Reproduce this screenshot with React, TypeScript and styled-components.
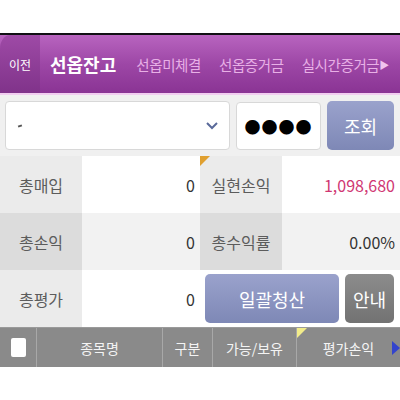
import React from "react";
import styled, { createGlobalStyle, css } from "styled-components";

const GlobalStyle = createGlobalStyle`
  html, body {
    margin: 0;
    padding: 0;
    background: #ffffff;
    font-family: "Noto Sans CJK KR", "Noto Sans", sans-serif;
  }
`;

const Screen = styled.div`
  width: 400px;
  height: 400px;
  display: flex;
  flex-direction: column;
  background: #ffffff;
  overflow: hidden;
`;

const TopSpace = styled.div`
  height: 33px;
  background: #ffffff;
  border-bottom: 2px solid #111014;
`;

const TabBar = styled.div`
  height: 58px;
  display: flex;
  align-items: center;
  background: linear-gradient(#b864bf, #9d47a6 50%, #8a3494);
  border-bottom: 2px solid #f1cdf0;
`;

const BackTab = styled.div`
  width: 40px;
  height: 100%;
  display: flex;
  align-items: center;
  justify-content: center;
  background: linear-gradient(#9e4aa6, #80338a);
  border-top-left-radius: 10px 14px;
  color: #ffffff;
  font-size: 12px;
  flex-shrink: 0;
`;

const Tab = styled.div<{ $active?: boolean }>`
  white-space: nowrap;
  color: #e8b0e6;
  font-size: 14.5px;
  letter-spacing: -0.4px;
  margin-left: 18px;
  ${({ $active }) =>
    $active &&
    css`
      color: #ffffff;
      font-size: 18px;
      font-weight: 700;
      letter-spacing: 0;
      margin-left: 10px;
      margin-right: 2px;
    `}
`;

const Arrow = styled.span`
  color: #f0c4ee;
  font-size: 10px;
`;

const SearchRow = styled.div`
  height: 61px;
  display: flex;
  align-items: center;
  gap: 6px;
  padding: 0 6px 0 5px;
  background: #f0f0f0;
`;

const SelectBox = styled.div`
  width: 225px;
  height: 49px;
  box-sizing: border-box;
  display: flex;
  align-items: center;
  justify-content: space-between;
  padding: 0 10px 0 12px;
  background: #ffffff;
  border: 1px solid #d8d8d8;
  border-radius: 4px;
`;

const Mark = styled.span`
  width: 4px;
  height: 2px;
  background: #555;
  transform: rotate(-20deg);
`;

const PwBox = styled.div`
  width: 85px;
  height: 48px;
  box-sizing: border-box;
  display: flex;
  align-items: center;
  justify-content: center;
  background: #ffffff;
  border: 1px solid #d8d8d8;
  border-radius: 4px;
  font-size: 16px;
  letter-spacing: 1px;
  color: #000;
`;

const Button = styled.div<{ $tone?: "blue" | "gray"; $w: number; $h: number }>`
  width: ${({ $w }) => $w}px;
  height: ${({ $h }) => $h}px;
  display: flex;
  align-items: center;
  justify-content: center;
  border-radius: 5px;
  color: #ffffff;
  font-size: 18px;
  flex-shrink: 0;
  background: ${({ $tone }) =>
    $tone === "gray"
      ? "linear-gradient(#8c8c8c, #727272)"
      : "linear-gradient(#9aa2cc, #7e88b6)"};
`;

const Grid = styled.div`
  display: grid;
  grid-template-columns: 82px 118px 82px 118px;
  grid-auto-rows: 57px;
`;

const Label = styled.div<{ $dark?: boolean; $corner?: boolean }>`
  position: relative;
  display: flex;
  align-items: center;
  justify-content: center;
  color: #5c5c5c;
  font-size: 16px;
  background: ${({ $dark }) => ($dark ? "#dcdcdc" : "#ebebeb")};
  ${({ $corner }) =>
    $corner &&
    css`
      &::before {
        content: "";
        position: absolute;
        top: 0;
        left: 0;
        border-top: 10px solid #e0a030;
        border-right: 10px solid transparent;
      }
    `}
`;

const Value = styled.div<{ $dark?: boolean; $pink?: boolean }>`
  display: flex;
  align-items: center;
  justify-content: flex-end;
  padding-right: 5px;
  color: ${({ $pink }) => ($pink ? "#d03672" : "#333333")};
  font-size: 16px;
  background: ${({ $dark }) => ($dark ? "#f2f2f2" : "#ffffff")};
`;

const ButtonCell = styled.div`
  grid-column: span 2;
  display: flex;
  align-items: center;
  gap: 6px;
  padding-left: 5px;
  background: #ffffff;
`;

const HeadRow = styled.div`
  height: 39px;
  display: grid;
  grid-template-columns: 36px 126px 50px 84px 104px;
  background: #8a8a8a;
  border-top: 1px solid #9a9a9a;
`;

const HeadCell = styled.div<{ $flag?: boolean }>`
  position: relative;
  display: flex;
  align-items: center;
  justify-content: center;
  color: #f4f4f4;
  font-size: 14px;
  border-left: 1px solid #a8a8a8;
  &:first-child {
    border-left: none;
  }
  ${({ $flag }) =>
    $flag &&
    css`
      &::before {
        content: "";
        position: absolute;
        top: 0;
        left: 0;
        border-top: 10px solid #f2ec8a;
        border-right: 10px solid transparent;
      }
    `}
`;

const Check = styled.span`
  width: 15px;
  height: 19px;
  background: #ffffff;
  border-radius: 2px;
`;

const MoreArrow = styled.span`
  position: absolute;
  right: 0;
  top: 50%;
  transform: translateY(-50%);
  border-left: 8px solid #3344cc;
  border-top: 7px solid transparent;
  border-bottom: 7px solid transparent;
`;

export default function App() {
  return (
    <>
      <GlobalStyle />
      <Screen>
        <TopSpace />
        <TabBar>
          <BackTab>이전</BackTab>
          <Tab $active>선옵잔고</Tab>
          <Tab>선옵미체결</Tab>
          <Tab>선옵증거금</Tab>
          <Tab>실시간증거금</Tab>
          <Arrow>▶</Arrow>
        </TabBar>
        <SearchRow>
          <SelectBox>
            <Mark />
            <svg width="14" height="10" viewBox="0 0 14 10">
              <path d="M2 2 L7 7 L12 2" fill="none" stroke="#5a6a9a" strokeWidth="2" />
            </svg>
          </SelectBox>
          <PwBox>●●●●</PwBox>
          <Button $w={67} $h={49}>조회</Button>
        </SearchRow>
        <Grid>
          <Label>총매입</Label>
          <Value>0</Value>
          <Label $corner>실현손익</Label>
          <Value $pink>1,098,680</Value>
          <Label $dark>총손익</Label>
          <Value $dark>0</Value>
          <Label $dark>총수익률</Label>
          <Value $dark>0.00%</Value>
          <Label>총평가</Label>
          <Value>0</Value>
          <ButtonCell>
            <Button $w={134} $h={49}>일괄청산</Button>
            <Button $tone="gray" $w={49} $h={49}>안내</Button>
          </ButtonCell>
        </Grid>
        <HeadRow>
          <HeadCell><Check /></HeadCell>
          <HeadCell>종목명</HeadCell>
          <HeadCell>구분</HeadCell>
          <HeadCell>가능/보유</HeadCell>
          <HeadCell $flag>
            평가손익
            <MoreArrow />
          </HeadCell>
        </HeadRow>
      </Screen>
    </>
  );
}
